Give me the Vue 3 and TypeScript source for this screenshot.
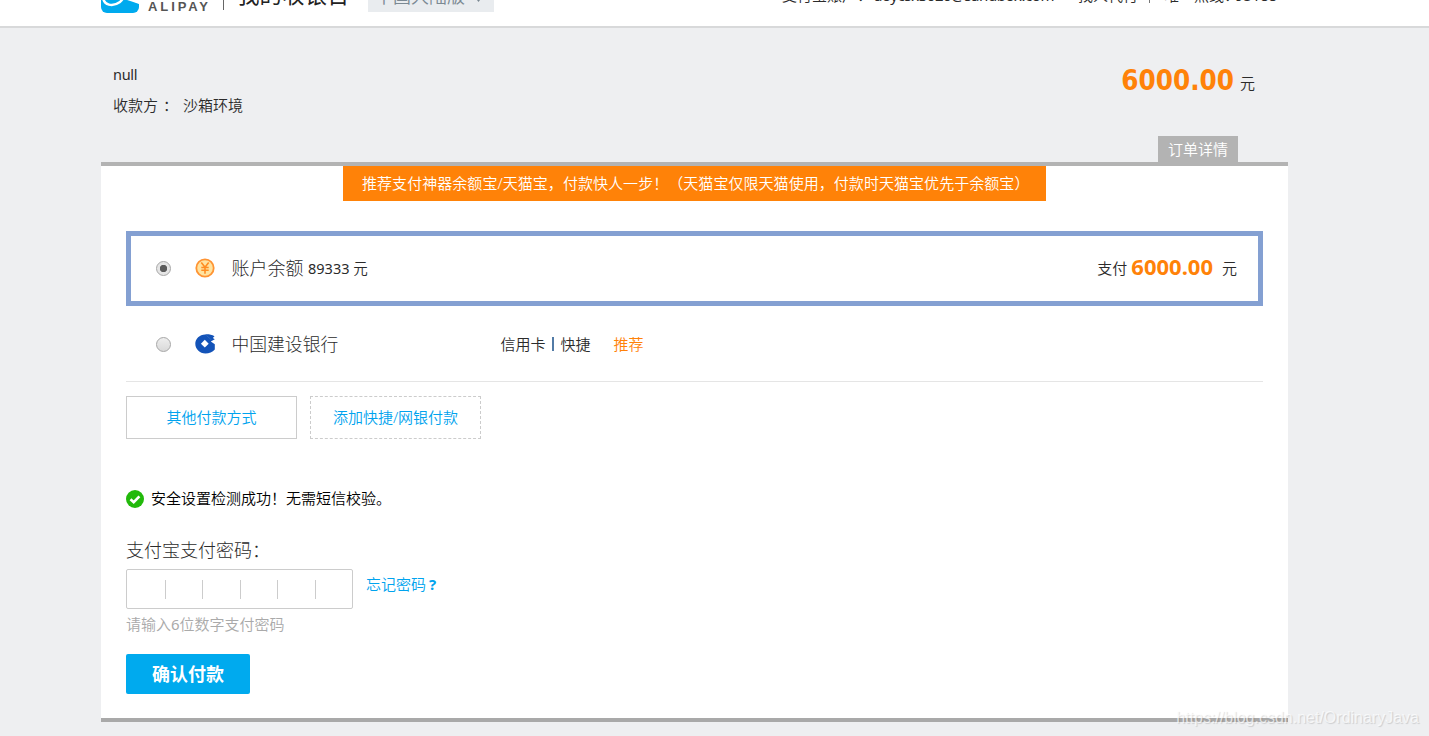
<script setup lang="ts">
import { ref } from 'vue'

const method = ref('balance')
const separators = [38, 75, 113, 150, 188]
</script>

<template>
  <div class="page">
    <header class="topbar">
      <div class="topbar-row">
        <svg class="logo" width="38" height="38" viewBox="0 0 38 38">
          <rect width="38" height="38" rx="6" fill="#00aaee" />
          <path d="M2 21C2 31 12 32 19 27C23 23 26 18 27 12M4 23C12 19 22 22 39 28" fill="none" stroke="#fff" stroke-width="2.400" />
          <path d="M21 22L26 20L39 25V29Z" fill="#fff" />
        </svg>
        <span class="brand">ALIPAY</span>
        <i class="brand-line"></i>
        <span class="title">我的收银台</span>
        <button class="region">中国大陆版<svg width="9" height="6" viewBox="0 0 9 6"><path d="M0 0h9L4.500 6z" fill="#7b8993" /></svg></button>
        <div class="account">
          <span class="who">支付宝账户：</span>
          <span class="mail">aoycsx3020@sandbox.com</span>
          <span class="friend">找人代付</span>
          <i class="bar"></i>
          <span class="hot">唯一热线：</span>
          <span class="phone">95188</span>
        </div>
      </div>
    </header>

    <main class="container">
      <section class="order">
        <div class="info">
          <p class="subject">null</p>
          <p class="payee"><span>收款方</span><span>：</span><span>沙箱环境</span></p>
        </div>
        <p class="total"><b>6000.00</b><span>元</span></p>
        <button class="detail">订单详情</button>
      </section>

      <section class="cashier">
        <p class="promo">推荐支付神器余额宝/天猫宝，付款快人一步！（天猫宝仅限天猫使用，付款时天猫宝优先于余额宝）</p>

        <label class="method selected">
          <input v-model="method" type="radio" value="balance" />
          <svg class="micon" width="20" height="20" viewBox="0 0 20 20">
            <circle cx="10" cy="10" r="8.700" fill="#ffe3a0" stroke="#ff9433" stroke-width="1.800" />
            <path d="M6.300 4.400L10 9.200L13.700 4.400M10 9v6.800M6.300 9.500h7.400M6.300 12.300h7.400" fill="none" stroke="#ff8d22" stroke-width="1.600" />
          </svg>
          <span class="mname">账户余额</span>
          <span class="balance">89333 <span>元</span></span>
          <span class="pay">支付<b>6000.00</b>元</span>
        </label>

        <label class="method other">
          <input v-model="method" type="radio" value="ccb" />
          <svg class="micon" width="20" height="20" viewBox="0 0 20 20">
            <path d="M10.200 .4C13 .2 16.500.4 19.500 2.200L17.800 4.100L19.800 5.300L15.800 7.600L19.800 10.200V15.600C17.600 18.500 14 19.600 10.500 19.600C4.600 19.400.3 15 .3 9.800C.3 4.700 4.600.6 10.200.4Z" fill="#1353b8" />
            <path d="M11.500 1.500L16.500 6" stroke="#3973c4" stroke-width=".7" />
            <path d="M9.800 5.800L13.700 9.700L9.800 13.600L5.900 9.700Z" fill="#fff" />
          </svg>
          <span class="mname bank">中国建设银行</span>
          <span class="kind">信用卡<i></i>快捷</span>
          <span class="tip">推荐</span>
        </label>

        <div class="more">
          <button>其他付款方式</button>
          <button class="dashed">添加快捷/网银付款</button>
        </div>

        <p class="safe">
          <svg width="18" height="18" viewBox="0 0 18 18">
            <circle cx="9" cy="9" r="9" fill="#22b90b" />
            <path d="M4.500 9.200L7.700 12.200L13.400 6.400" fill="none" stroke="#fff" stroke-width="2.600" />
          </svg>
          <span>安全设置检测成功！无需短信校验。</span>
        </p>

        <p class="pwd-label">支付宝支付密码：</p>
        <div class="pwd-row">
          <div class="pwd"><i v-for="x in separators" :key="x" :style="{ left: x + 'px' }"></i></div>
          <a class="forgot">忘记密码<b>?</b></a>
        </div>
        <p class="hint">请输入<span>6</span>位数字支付密码</p>
        <button class="submit">确认付款</button>
      </section>
    </main>
    <span class="watermark">https://blog.csdn.net/OrdinaryJava</span>
  </div>
</template>

<style>
body { margin: 0; overflow: hidden; }
</style>

<style scoped>
* { box-sizing: border-box; }
.page {
  position: relative;
  width: 1429px;
  height: 736px;
  overflow: hidden;
  background: #eeeff1;
  color: #2b2b2b;
  font: 350 15px/20px "Noto Sans", "Noto Sans CJK SC", sans-serif;
}
p { margin: 0; }
span, a, button { white-space: nowrap; }
button { font: inherit; padding: 0; border: 0; cursor: pointer; }
.topbar {
  height: 28px;
  overflow: hidden;
  background: #fff;
  border-bottom: 2px solid #d8d9da;
  display: flex;
  align-items: flex-end;
}
.topbar-row { display: flex; align-items: flex-end; width: 1187px; height: 60px; margin-left: 101px; flex: none; }
.logo { margin-bottom: 13px; }
.brand { margin: 0 0 12px 9px; width: 66px; font: bold 13px/14px "Liberation Sans", sans-serif; letter-spacing: 2.9px; color: #555; }
.brand-line { width: 1px; height: 30px; margin: 0 13px 16px 9px; background: #666; }
.title { width: 112px; font-size: 22.500px; line-height: 28px; margin: 0 19px 17px 0; font-weight: 400; color: #222; }
.region { display: flex; align-items: center; width: 126px; height: 34px; margin-bottom: 14px; padding: 2px 0 0 7px; background: #e9ecef; color: #7b8993; font-size: 18px; line-height: 20px; }
.region svg { margin: 5px 0 0 9px; }
.account { display: flex; align-items: flex-end; height: 20px; margin: 0 0 21px 288px; white-space: nowrap; }
.who { width: 92px; }
.mail { width: 204px; font-weight: 400; letter-spacing: -.42px; }
.friend { width: 71px; }
.bar { width: 1px; height: 14px; margin: 0 14px 2px 0; background: #777; }
.hot { width: 71px; }
.phone { font-weight: 400; letter-spacing: -.2px; }

.container { width: 1187px; margin: 0 0 0 101px; }
.order { position: relative; display: flex; justify-content: space-between; height: 134px; padding: 36px 33px 0 12px; }
.subject { font-size: 14.500px; font-weight: 400; letter-spacing: -.3px; }
.payee { display: flex; margin-top: 11px; }
.payee span:nth-child(2) { width: 25px; padding-left: 5px; }
.total { display: flex; align-items: baseline; height: 34px; gap: 6px; margin-top: -1px; }
.total span { position: relative; top: -1px; }
.total b { color: #ff8208; font: bold 27.500px/34px "DejaVu Sans Condensed", sans-serif; }
.detail { position: absolute; right: 50px; bottom: 0; width: 80px; height: 26px; background: #b3b3b3; color: #fff; line-height: 26px; }
.cashier { height: 560px; padding: 0 25px; border-top: 4px solid #b3b3b3; border-bottom: 4px solid #a9a9a9; background: #fff; }
.promo { width: 703px; height: 35px; margin-left: 217px; padding-left: 19px; background: #ff8208; color: #fff; line-height: 34px; white-space: nowrap; letter-spacing: .05px; }
.method { display: flex; align-items: center; height: 75px; padding-left: 30px; }
.method.selected { margin-top: 30px; padding: 0 21px 0 25px; border: 5px solid #84a0d2; }
.method.other { height: 76px; padding-top: 2px; border-bottom: 1px solid #e5e5e5; }
.method input {
  appearance: none;
  width: 15px;
  height: 15px;
  margin: 0;
  border: 1px solid #a6a6a6;
  border-radius: 50%;
  background: linear-gradient(#eee, #d9d9d9);
}
.method input:checked { background: radial-gradient(circle, #5c5c5c 0 3.400px, #e5e5e5 4px); }
.micon { margin: 0 17px 2px 23.500px; }
.mname { width: 76.500px; margin-bottom: 2px; font-size: 18px; line-height: 24px; font-weight: 300; }
.bank { width: 268px; margin: 0 0 2px 0; font-size: 17.800px; }
.balance { margin-bottom: 2px; font-size: 14.500px; font-weight: 400; }
.balance span { font-weight: 350; }
.pay { margin: 0 0 4px auto; }
.pay b { position: relative; top: 1px; margin: 0 9px 0 4px; color: #ff8208; font-size: 22px; font-weight: 700; }
.kind { display: flex; align-items: center; width: 113px; margin: 0 0 2px 1px; }
.kind i { width: 2px; height: 14px; margin: 0 7px 0 6px; background: #527ba6; }
.tip { margin-bottom: 2px; color: #ff8208; }
.more { display: flex; gap: 13px; margin-top: 14px; }
.more button { width: 171px; height: 43px; padding-bottom: 2px; border: 1px solid #ccc; background: #fff; color: #00a3ee; }
.more .dashed { border-style: dashed; }
.safe { display: flex; align-items: center; gap: 7px; height: 20px; margin-top: 50px; color: #000; }
.safe span { margin-bottom: 2px; }
.pwd-label { margin-top: 28px; height: 26px; font-size: 18px; line-height: 26px; font-weight: 300; }
.pwd-row { display: flex; gap: 13px; margin-top: 6px; }
.pwd { position: relative; width: 227px; height: 40px; border: 1px solid #ccc; border-radius: 2px; }
.pwd i { position: absolute; top: 10px; width: 1px; height: 19px; background: #ccc; }
.forgot { color: #00a3ee; line-height: 30px; }
.forgot b { margin-left: 3px; }
.hint { margin-top: 5px; color: #aaa; }
.hint span { font-weight: 400; }
.submit { width: 124px; height: 40px; margin-top: 20px; border-radius: 2px; background: #00aaee; color: #fff; font-size: 18px; font-weight: 700; }
.watermark {
  position: absolute;
  right: 10px;
  bottom: 8px;
  color: rgba(255, 255, 255, .7);
  font: 16px/20px "Liberation Sans", sans-serif;
  text-shadow: 1px 1px 1px rgba(0, 0, 0, .14);
}
</style>
